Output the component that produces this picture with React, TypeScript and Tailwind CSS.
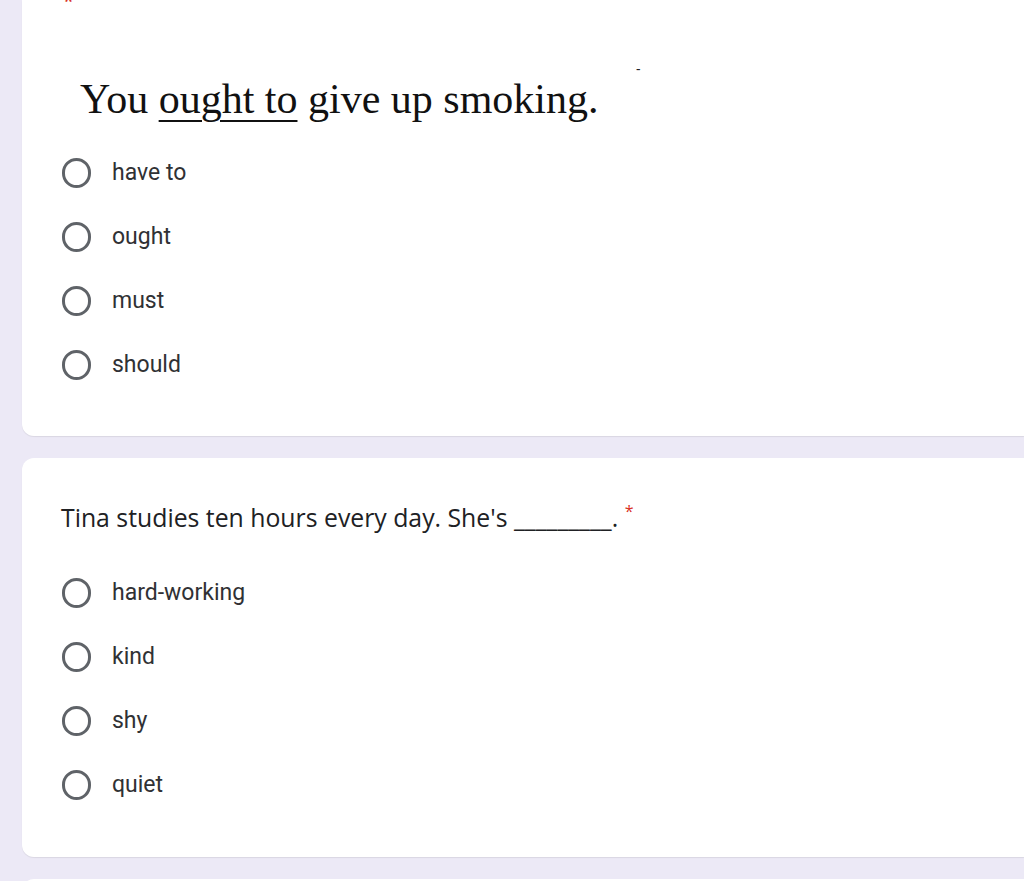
import React from "react";

const Radio = ({ label }: { label: string }) => (
  <div className="flex items-center h-[64px]">
    <div className="w-[29px] h-[30px] rounded-full border-[3px] border-[#5f6368] ml-[62px]" />
    <span className="ml-[21px] text-[23px] text-[#303134]" style={{ fontFamily: "Roboto, sans-serif" }}>{label}</span>
  </div>
);

export default function App() {
  return (
    <div className="w-[1024px] h-[881px] bg-[#ece9f6] overflow-hidden flex flex-col gap-[22px] pl-[22px]">
      <div className="bg-white rounded-bl-[12px] h-[436px] shrink-0 relative shadow-[0_1px_1px_rgba(0,0,0,0.08)]">
        <span className="absolute left-[41px] top-[-14px] text-[#d93025] text-[20px]">*</span>
        <span className="absolute left-[614px] top-[58px] text-[#202124] text-[14px]">-</span>
        <div className="pt-[71px] pl-[58px] text-[42px] text-[#111] leading-[56px]" style={{ fontFamily: "'Liberation Serif', serif" }}>
          You <span className="underline decoration-[1.5px] underline-offset-[7px]">ought to</span> give up smoking.
        </div>
        <div className="mt-[14px]">
          {["have to", "ought", "must", "should"].map((l) => (
            <div key={l} className="-ml-[22px]"><Radio label={l} /></div>
          ))}
        </div>
      </div>
      <div className="bg-white rounded-l-[12px] h-[399px] shrink-0 shadow-[0_1px_1px_rgba(0,0,0,0.08)]">
        <div className="pt-[41px] pl-[39px] text-[24.8px] text-[#202124]" style={{ fontFamily: "'Open Sans', sans-serif" }}>
          Tina studies ten hours every day. She's _________. <span className="text-[#d93025] text-[16px] align-top">*</span>
        </div>
        <div className="mt-[25px]">
          {["hard-working", "kind", "shy", "quiet"].map((l) => (
            <div key={l} className="-ml-[22px]"><Radio label={l} /></div>
          ))}
        </div>
      </div>
      <div className="bg-white rounded-tl-[12px] h-[100px] shrink-0" />
    </div>
  );
}
